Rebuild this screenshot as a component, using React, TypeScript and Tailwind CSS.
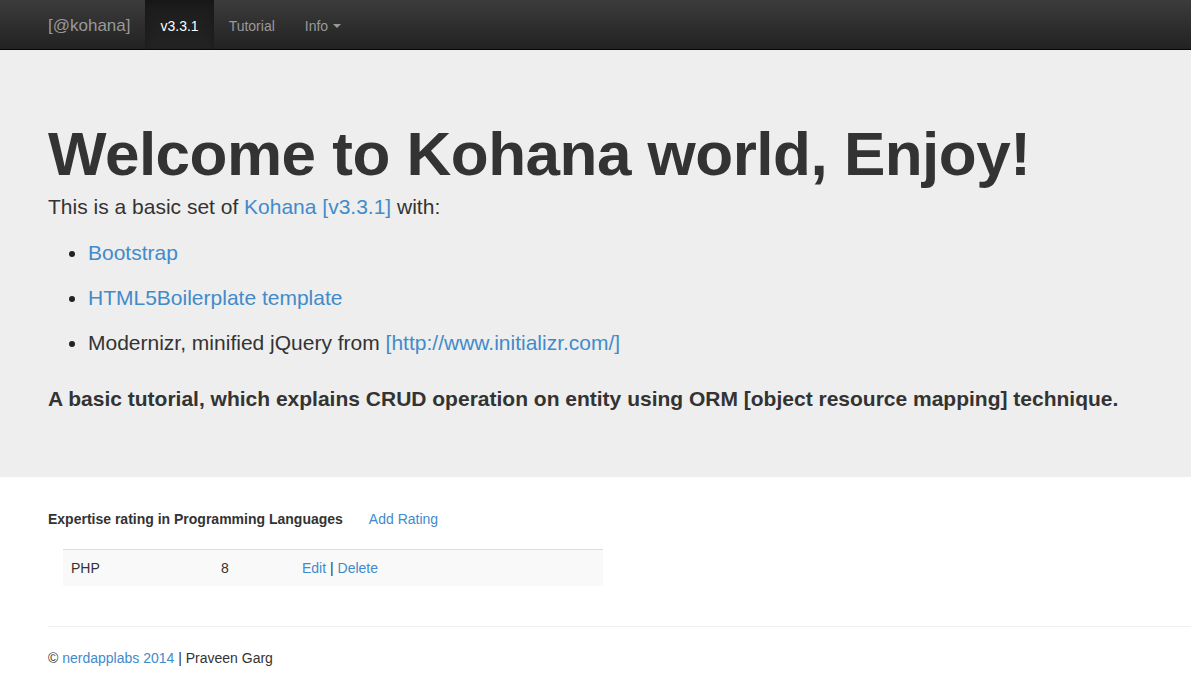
const font = { fontFamily: '"Liberation Sans", Arial, sans-serif' };

function Navbar() {
  return (
    <nav className="flex h-[50px] items-stretch border-b border-[#080808] bg-gradient-to-b from-[#3c3c3c] to-[#222222] pl-[33px]">
      <a className="flex items-center px-[15px] pt-[3px] text-[17px] text-[#999999]">[@kohana]</a>
      <ul className="flex items-stretch pt-[3px] text-[14px]">
        <li className="-mt-[3px] flex items-center bg-gradient-to-b from-[#1c1c1c] to-[#232323] px-[15px] pt-[3px] text-white shadow-[inset_0_3px_9px_rgba(0,0,0,0.25)]">
          v3.3.1
        </li>
        <li className="flex items-center px-[15px] text-[#999999]">Tutorial</li>
        <li className="flex items-center px-[15px] text-[#999999]">
          Info
          <span className="ml-[5px] inline-block h-0 w-0 border-x-[4px] border-t-[4px] border-x-transparent border-t-[#999999]"></span>
        </li>
      </ul>
    </nav>
  );
}

function Jumbotron() {
  return (
    <section className="h-[427px] bg-[#eeeeee] px-[48px] pt-[70px] text-[#333333]">
      <h1 className="text-[62px] font-bold leading-[1.1] tracking-[-0.5px]">
        Welcome to Kohana world, Enjoy!
      </h1>
      <p className="mt-[4px] text-[21px] font-light leading-[30px]">
        This is a basic set of <a className="text-[#428bca]">Kohana [v3.3.1]</a> with:
      </p>
      <ul className="mt-[16px] list-disc pl-[40px] text-[21px] font-light leading-[30px] marker:text-[#222222]">
        <li className="mb-[15px]">
          <a className="text-[#428bca]">Bootstrap</a>
        </li>
        <li className="mb-[15px]">
          <a className="text-[#428bca]">HTML5Boilerplate template</a>
        </li>
        <li className="mb-[15px]">
          Modernizr, minified jQuery from{" "}
          <a className="text-[#428bca]">[http://www.initializr.com/]</a>
        </li>
      </ul>
      <h4 className="mt-[26px] text-[21px] font-bold leading-[30px]">
        A basic tutorial, which explains CRUD operation on entity using ORM [object resource mapping] technique.
      </h4>
    </section>
  );
}

function Ratings() {
  const rows = [{ lang: "PHP", rating: 8 }];
  return (
    <section className="px-[48px] pt-[32px] text-[14px] text-[#333333]">
      <div className="flex items-center leading-[20px]">
        <span className="font-bold">Expertise rating in Programming Languages</span>
        <a className="ml-[26px] text-[#428bca]">Add Rating</a>
      </div>
      <table className="ml-[15px] mt-[20px] w-[540px] border-t border-[#dddddd]">
        <tbody>
          {rows.map((r) => (
            <tr key={r.lang} className="bg-[#f9f9f9]">
              <td className="h-[36px] w-[150px] px-[8px] pt-[2px]">{r.lang}</td>
              <td className="w-[81px] px-[8px] pt-[2px]">{r.rating}</td>
              <td className="px-[8px] pt-[2px]">
                <a className="text-[#428bca]">Edit</a> | <a className="text-[#428bca]">Delete</a>
              </td>
            </tr>
          ))}
        </tbody>
      </table>
    </section>
  );
}

function Footer() {
  return (
    <footer className="pl-[48px] text-[14px] text-[#333333]">
      <hr className="mt-[40px] border-t border-[#eeeeee]" />
      <p className="mt-[21px] leading-[20px]">
        © <a className="text-[#428bca]">nerdapplabs 2014</a> | Praveen Garg
      </p>
    </footer>
  );
}

export default function App() {
  return (
    <div className="min-h-[685px] bg-white" style={font}>
      <Navbar />
      <Jumbotron />
      <Ratings />
      <Footer />
    </div>
  );
}
